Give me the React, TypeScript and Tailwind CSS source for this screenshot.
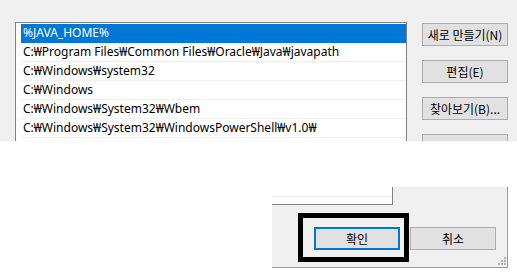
const paths = [
  '%JAVA_HOME%',
  'C:₩Program Files₩Common Files₩Oracle₩Java₩javapath',
  'C:₩Windows₩system32',
  'C:₩Windows',
  'C:₩Windows₩System32₩Wbem',
  'C:₩Windows₩System32₩WindowsPowerShell₩v1.0₩',
];

const ui = { fontFamily: '"Noto Sans", "Noto Sans CJK KR", sans-serif' };

function WinButton({ label, focused = false }: { label: string; focused?: boolean }) {
  return (
    <div
      className={
        'flex h-[23px] w-[86px] shrink-0 items-center justify-center bg-[#e1e1e1] text-[12px] leading-none text-black ' +
        (focused ? 'border-2 border-[#0078d7]' : 'border border-[#adadad]')
      }
      style={{ fontFamily: '"Noto Sans CJK KR", "Noto Sans", sans-serif' }}
    >
      {label}
    </div>
  );
}

function Grip() {
  const dots = [
    [6, 0],
    [3, 3],
    [6, 3],
    [0, 6],
    [3, 6],
    [6, 6],
  ];
  return (
    <div className="absolute bottom-[2px] right-[1px] h-[8px] w-[8px]">
      {dots.map(([x, y], i) => (
        <div key={i} className="absolute h-[2px] w-[2px] bg-[#b4b4b4]" style={{ left: x, top: y }} />
      ))}
    </div>
  );
}

export default function App() {
  return (
    <div className="h-[273px] w-[517px] overflow-hidden bg-white" style={ui}>
      {/* top half of the dialog, cut off below */}
      <div className="flex h-[141px] overflow-hidden bg-[#f0f0f0] pl-[15px] pt-[22px]">
        <div className="h-[200px] w-[392px] shrink-0 border border-[#828282] bg-white pl-[5px] pt-[1px]">
          {paths.map((p, i) => (
            <div
              key={p}
              className={
                'flex h-[19px] items-center border-b pl-[2px] text-[12px] ' +
                (i === 0 ? 'border-[#0078d7] bg-[#0078d7] text-white' : 'border-[#f0f0f0] text-black')
              }
            >
              {p}
            </div>
          ))}
        </div>
        <div className="ml-[15px] flex flex-col gap-[14px] pt-[1px]">
          <WinButton label="새로 만들기(N)" />
          <WinButton label="편집(E)" />
          <WinButton label="찾아보기(B)..." />
          <WinButton label="" />
        </div>
      </div>

      {/* bottom-right corner of the dialog */}
      <div className="relative ml-[272px] mt-[46px] h-[81px] w-[236px] border-b border-r border-[#9a9a9a] bg-[#f0f0f0]">
        <div className="h-[18px] w-[121px] border-b border-r border-[#828282] bg-white">
          <div className="h-[10px] border-b border-[#ececec]" />
        </div>
        <div className="ml-[42px] mt-[22px] flex gap-[10px]">
          <WinButton label="확인" focused />
          <WinButton label="취소" />
        </div>
        <div className="absolute left-[26px] top-[26px] h-[49px] w-[111px] border-[5px] border-black" />
        <Grip />
      </div>
    </div>
  );
}
